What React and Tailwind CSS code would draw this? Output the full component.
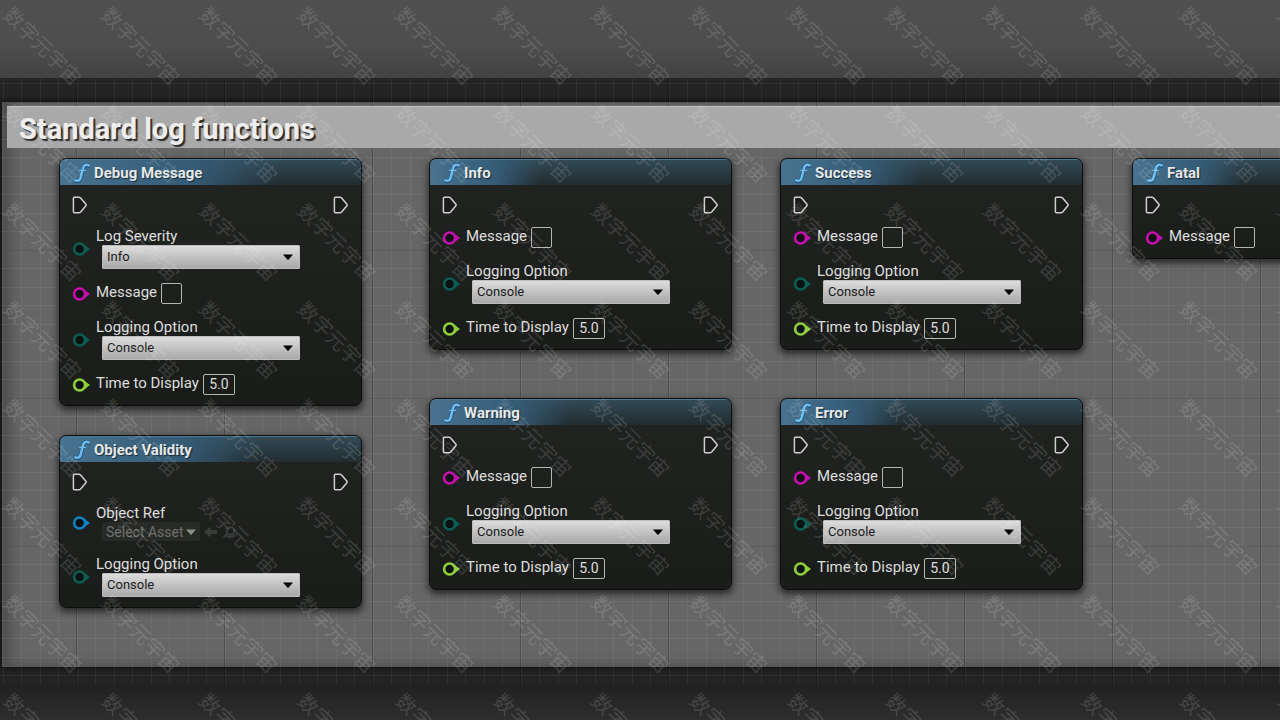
import React from 'react';
import { clsx } from 'clsx';

const PIN_COLORS = {
  enum: '#0b5f52',
  string: '#c70fb0',
  float: '#8fd03a',
  object: '#0d82c4',
};

const LOG_ROWS = [
  { kind: 'text', pin: 'string', label: 'Message' },
  { kind: 'select', pin: 'enum', label: 'Logging Option', value: 'Console' },
  { kind: 'number', pin: 'float', label: 'Time to Display', value: '5.0' },
];

const NODES = [
  {
    title: 'Debug Message',
    place: 'left-[57px] top-[56px]',
    glow: 'w-[220px]',
    rows: [{ kind: 'select', pin: 'enum', label: 'Log Severity', value: 'Info' }, ...LOG_ROWS],
  },
  {
    title: 'Object Validity',
    place: 'left-[57px] top-[333px]',
    glow: 'w-[200px]',
    rows: [
      { kind: 'asset', pin: 'object', label: 'Object Ref', value: 'Select Asset' },
      { kind: 'select', pin: 'enum', label: 'Logging Option', value: 'Console' },
    ],
  },
  { title: 'Info', place: 'left-[427px] top-[56px]', glow: 'w-[110px]', rows: LOG_ROWS },
  { title: 'Warning', place: 'left-[427px] top-[296px]', glow: 'w-[140px]', rows: LOG_ROWS },
  { title: 'Success', place: 'left-[778px] top-[56px]', glow: 'w-[140px]', rows: LOG_ROWS },
  { title: 'Error', place: 'left-[778px] top-[296px]', glow: 'w-[120px]', rows: LOG_ROWS },
  {
    title: 'Fatal',
    place: 'left-[1130px] top-[56px]',
    glow: 'w-[110px]',
    rows: [{ kind: 'text', pin: 'string', label: 'Message' }],
  },
];

const ExecPin = () => (
  <svg className="h-[18px] w-4" viewBox="0 0 16 18" fill="#1a1c1a" stroke="#cfcfcf" strokeWidth="1.5" strokeLinejoin="round">
    <path d="M1.4 2.2Q1.4 1.2 2.4 1.2H6.8Q7.8 1.2 8.6 2L13.9 8.2Q14.6 9 13.9 9.8L8.6 16Q7.8 16.8 6.8 16.8H2.4Q1.4 16.8 1.4 15.8Z" />
  </svg>
);

const DataPin = ({ type }) => (
  <svg className="mt-px h-4 w-[18px] shrink-0" viewBox="0 0 18 16">
    <path d="M13 4.2L18 8L13 11.8Z" fill={PIN_COLORS[type]} />
    <circle cx="7.6" cy="8" r="5.5" fill="#0d110f" stroke={PIN_COLORS[type]} strokeWidth="2.6" />
  </svg>
);

const Caret = ({ className }) => (
  <svg className={clsx('pointer-events-none h-[6px] w-[10px]', className)} viewBox="0 0 10 6" fill="currentColor">
    <path d="M0 0.4H10L5.6 5.4Q5 6 4.4 5.4Z" />
  </svg>
);

const FunctionIcon = () => (
  <svg className="h-5 w-4" viewBox="0 0 16 20" fill="none" strokeLinecap="round">
    <path d="M14.6 2.8C11.6 1.2 9.8 2.2 9 5.4L6.8 14.2C6.2 17.4 4.6 19 1.4 17.6" stroke="#1d4f74" strokeWidth="4" />
    <path d="M14.6 2.4C11.6 1 9.8 2 9 5.2L6.8 14C6.2 17 4.6 18.6 1.4 17.4" stroke="#6fbdf0" strokeWidth="2.6" />
    <path d="M5.8 7.4H11.4" stroke="#6fbdf0" strokeWidth="1.2" />
  </svg>
);

const Row = ({ id, row }) => {
  const { kind, pin, label, value } = row;
  const stacked = kind === 'select' || kind === 'asset';

  return (
    <div className="flex items-center gap-[6px]">
      <DataPin type={pin} />
      <div className={clsx('flex', stacked ? 'flex-col' : 'items-start gap-1')}>
        <label htmlFor={id} className="h-[18px] text-[15px] leading-[18px] text-[#dedede]">
          {label}
        </label>

        {kind === 'select' && (
          <div className="relative ml-[6px]">
            <select
              id={id}
              defaultValue={value}
              className="block h-6 w-[198px] appearance-none rounded-[1px] border border-[#bcbcbc] bg-linear-to-b from-[#dcdcdc] to-[#a9a9a9] px-1 text-[13px] text-[#1c1c1c] outline-none"
            >
              <option>{value}</option>
            </select>
            <Caret className="absolute top-[9px] right-[7px] text-black" />
          </div>
        )}

        {kind === 'asset' && (
          <div className="ml-[6px] flex items-center gap-1 text-[#3b3d3b]">
            <button
              id={id}
              className="flex h-[19px] items-center gap-[2px] rounded-[3px] bg-[#282a28] px-1 text-[14px] leading-[18px] text-[#70726f]"
            >
              {value}
              <Caret className="text-[#8c8e8b]" />
            </button>
            <button aria-label="Use selected asset">
              <svg className="h-3 w-[14px]" viewBox="0 0 14 12" fill="currentColor">
                <path d="M0 6L6.5 0.5V4H13V8H6.5V11.5Z" />
              </svg>
            </button>
            <button aria-label="Browse to asset">
              <svg className="h-3 w-[14px]" viewBox="0 0 14 12" fill="none" stroke="currentColor" strokeWidth="2">
                <circle cx="8.5" cy="5" r="3.8" />
                <path d="M5.6 8L1.5 11.2" />
              </svg>
            </button>
          </div>
        )}

        {kind === 'text' && (
          <input
            id={id}
            type="text"
            className="h-[21px] w-[21px] rounded-[2px] border border-[#b4b6b4] bg-transparent px-1 text-[13px] text-white outline-none"
          />
        )}

        {kind === 'number' && (
          <input
            id={id}
            type="text"
            inputMode="decimal"
            defaultValue={value}
            className="h-[21px] w-8 rounded-[2px] border border-[#b4b6b4] bg-transparent text-center text-[14px] text-[#dedede] outline-none"
          />
        )}
      </div>
    </div>
  );
};

const Node = ({ node }) => (
  <article
    className={clsx(
      'absolute w-[303px] overflow-hidden rounded-[7px] border border-[#0c0e0d] bg-linear-to-b from-[#222422] to-[#1a1c19] shadow-[0_3px_7px_1px_rgba(0,0,0,0.6)]',
      node.place
    )}
  >
    <header className="relative flex h-[26px] items-center border-t border-[#4d7890] bg-linear-to-b from-[#324a56] to-[#222c30] pl-[14px]">
      <div
        className={clsx(
          'absolute inset-y-0 left-0 bg-linear-to-r from-[#487390] via-[#355b76] via-60% to-transparent',
          node.glow
        )}
      />
      <div className="relative flex items-center gap-1">
        <FunctionIcon />
        <h2 className="text-[15px] leading-5 font-bold text-[#e4e9ec] text-shadow-[1px_1px_1px_rgba(0,0,0,0.6)]">
          {node.title}
        </h2>
      </div>
    </header>
    <div className="pt-[11px] pr-3 pb-[10px] pl-3">
      <div className="flex justify-between">
        <ExecPin />
        <ExecPin />
      </div>
      <div className="mt-[13px] flex flex-col gap-[14px]">
        {node.rows.map((row) => (
          <Row key={row.label} row={row} id={`${node.title}-${row.label}`.replace(/ /g, '-').toLowerCase()} />
        ))}
      </div>
    </div>
  </article>
);

// Minor lines every half of 37px, major lines every 148px
const GridLines = () => (
  <div className="pointer-events-none absolute inset-0">
    <div className="absolute inset-0 bg-[linear-gradient(to_right,rgba(255,255,255,0.05)_1px,transparent_1px,transparent_18px,rgba(255,255,255,0.05)_18px,rgba(255,255,255,0.05)_19px,transparent_19px)] bg-[length:37px_37px] bg-[position:3px_0px]" />
    <div className="absolute inset-0 bg-[linear-gradient(to_bottom,rgba(255,255,255,0.05)_1px,transparent_1px,transparent_18px,rgba(255,255,255,0.05)_18px,rgba(255,255,255,0.05)_19px,transparent_19px)] bg-[length:37px_37px] bg-[position:0px_24px]" />
    <div className="absolute inset-0 bg-[linear-gradient(to_right,rgba(0,0,0,0.22)_1px,transparent_1px)] bg-[length:148px_148px] bg-[position:76px_0px]" />
    <div className="absolute inset-0 bg-[linear-gradient(to_bottom,rgba(0,0,0,0.15)_1px,transparent_1px)] bg-[length:148px_148px] bg-[position:0px_24px]" />
  </div>
);

const Watermark = () => (
  <div
    aria-hidden="true"
    className="pointer-events-none absolute inset-0 z-20 grid auto-rows-[98px] grid-cols-[repeat(14,98px)] overflow-hidden select-none"
  >
    {Array.from({ length: 14 * 8 }, (_, i) => (
      <span key={i} className="flex h-[92px] w-[86px] items-center justify-center">
        <span className="rotate-45 font-['Noto_Sans_CJK_SC',sans-serif] text-[20px] leading-5 whitespace-nowrap text-white/15">
          数字元宇宙
        </span>
      </span>
    ))}
  </div>
);

const App = () => (
  <div className="relative flex min-h-screen flex-col overflow-hidden bg-[#232323] font-[Roboto,sans-serif]">
    <div className="h-[78px] bg-linear-to-b from-[#505050] via-[#4d4d4d] via-60% to-[#424242]" />

    <main className="relative flex flex-1 flex-col bg-[#242424] pt-6 pb-[18px]">
      <section className="-mr-4 ml-[2px] flex flex-1 flex-col border border-[#565656] bg-[#666666] px-1 pt-[3px] shadow-[0_0_6px_2px_rgba(0,0,0,0.5),inset_10px_-4px_14px_-4px_rgba(0,0,0,0.3)]">
        <header className="relative z-10 border-t border-[#c4c4c4] bg-[#a9a9a9] px-3 pt-1 pb-px">
          <h1 className="text-[29px] leading-9 font-bold text-[#eeeeee] text-shadow-[2px_2px_1px_rgba(0,0,0,0.75)]">
            Standard log functions
          </h1>
        </header>
      </section>
      <GridLines />
      <div className="absolute top-6 left-[2px]">
        {NODES.map((node) => (
          <Node key={node.title} node={node} />
        ))}
      </div>
    </main>

    <div className="h-[35px] bg-linear-to-b from-[#212121] to-[#2e2e2e]" />
    <Watermark />
  </div>
);

export default App;
